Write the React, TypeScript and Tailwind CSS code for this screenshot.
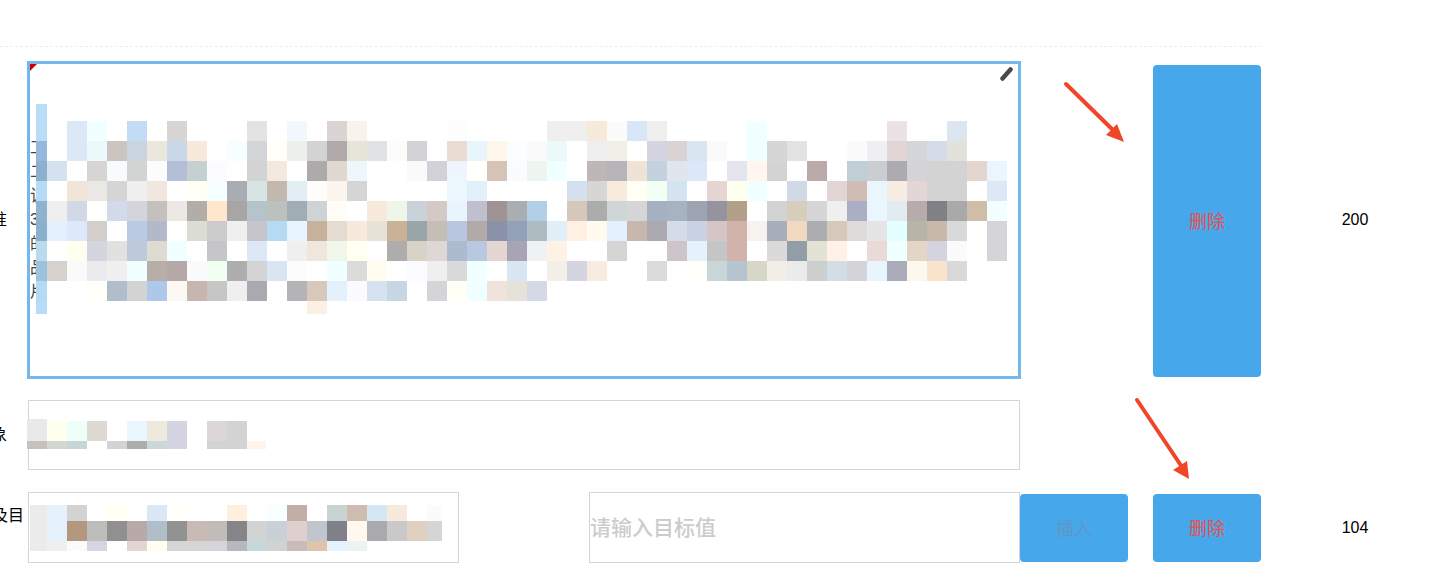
import * as React from "react"

// redacted areas of the page: one string per row, "." is an untouched (white) cell
const editorRows = [
    ". dce8f5 f0ffff . c2dcf5 . d8d6d4 . . . e3e3e3 . f0f7fd . dbd4d4 f9f3ec . . . . fdfdfd . . . . efefef efefef f6eadb fbfbfb d8e7f8 efefef . . . . f0ffff . . . . . . ebe3e3 . . dbe6f1 . .",
    ". dce8f5 ecf9fb cbc4c1 cad5df ebe7dc c9d9e8 f7eadd . f6feff d4d5d9 fffef8 ebf1ea d3d3d3 b0aaaa e5e6d8 e0e3e3 fefcfa d3d3d5 . ebdcd2 e8f5fd fff7ea fafeff fafafa ecf9f9 . efeff0 f0efe8 . d5d5e2 dbd3d3 d9e6f2 fafafa . f0ffff d6d6d6 e3e3e3 . . fbfbfb efeff2 e1d5d5 d5d6d9 d5dce7 e2e2da . .",
    "d4e2f0 . d6d5d3 f7fbfb d2d3d3 fcfcff b4bed6 c5d1d1 fcfcff . d3d3d3 f3e9de . aeaaab e0d7d1 eef8fa . . fafafa d1d1d7 eef5fd fffffb d4c3b6 f8fcff eef4f0 f0ffff . bfb6b6 b7b4ba f0e2d5 c4d2e0 e1e5ed dce8f7 . e5e5ef fff6f0 d3d3d3 . bcaaaa . c0ced5 cacdd1 acabb1 d4d4d6 d3d3d3 d3d3d3 e3d6cf ebf5fd",
    ". f1e5da eae8e4 d5d5d5 efefef f1e7df . fffff6 f6ffff a9acb3 d7e4e3 c3b8ae e2eef3 fffdfa fcf5ef d5d5d5 . . . . ecf7fe e2f0fb . . . . d4e0ed d8d6d4 f8eadd fffff5 f2fff5 d4e3f0 . e6d6d3 fffff0 f0ffff . d2d9e6 . e2d5d5 d1bcb4 e9f6fd f6ece2 e2d6d6 d3d3d3 d3d3d3 . dce8f5",
    "efefef d2d8e5 . d3daea d4d4dd c4c0bd ece8e4 b3adaa fee7cd a9a4a5 b5c3ca bcc0be a0adb5 ced3d6 fffdf5 . f7e9dc eff5e9 c9d2d8 d4c9c4 e9f5fd c0bfcd a09393 a9aeb3 b1cfe9 . d5c7ba acacac ced6d6 d6d6d8 a4b1c2 a6b3c0 9da5b2 9494a0 b3a088 . d3d3d3 d6ceba d6d6d6 efefef abafc5 e9f6fd e0ecf0 b8abab 808187 a9a9a9 d0bda8 f3ffff",
    "e3f0fe dde9fb d3cfcd . b9cae3 b2b9ca . dbdcd3 cccccc efefef c6c5cc b7daf3 e7f6fe c8b19a e4dcd0 f6eadd e6e2d7 c9b296 98a5a9 c5beb5 b8c7df b1aaa9 8a91a9 92a1b7 adbcc0 e2eef8 fff0e3 fffbee e3f0fd c7b7af aba8af d4dce8 c9d2e3 d5c5c5 d2b3ab f6f2f0 a9afba f1d8c0 acadb1 d6c8bb e0dbdb e5e5e5 e3ffff b7b4a8 c8b8aa d9d9d9 . d5d5d9",
    ". fffff0 d3d5df e1e1e1 bdcad9 dedcd0 f0ffff . c6c6c8 . dde8f6 . efefef f0e6de f0f6ea fffff2 . aeadab d9d2c7 dfd6d6 adbbcf b8c9df e3d6d3 a7a4b6 eef2f5 fef1e6 . . d5d5d5 . . cdc5c9 e6f2fb c5c5c7 d2b3ab . dadada 919ea7 e2e2d5 fff1e5 . e9dad7 f0ffff e3d6c7 d4d4e1 fbfbfb . d5d5d9",
    "d6d1cd fafafa ebebed f0f0f0 f0ffff b8aea8 b6a8a8 fbfbfd f1fff1 aeaeae d4d4d4 d9e5f2 fcfcfc . f0ffff dbdbdb fffdf0 . fafcff efefef dadada f0ffff . d8e6f4 . f4efe8 d5d5e2 f8ebe0 . . dbdbdb . fffffa c9d6d7 b6c4d0 d6d6c9 f0eee6 ebebeb cdcfce d1dee6 d4d3d7 e9f5fd aaacbc fdf8ed f9e4cb d9d9d9 . .",
    ". . fffffa b0becb d3d3d3 adc8e8 fcf8f3 c7b5b0 c6c6c6 efefef aaa9af . b4b4b6 d8c8bb e5f0fd fbfbfd d6e2f1 c6d6e3 . d4d5d8 fffff5 f0ffff efe3db e5e2d9 d5d8e5",
    ". . . . . . . . . . . . . fbf0e3",
]
const editorHeights = [20, 20, 20, 20, 20, 20, 20, 20, 20, 13]

const stripRows = ["b9dcf7", "b9dcf7", "95b7de", "8db1cc", "b5dbf7", "8fb2cd", "8bb0cb", "b8dcee", "9cc2dc", "b5daf6", "b8dcf7"]
const stripHeights = [17, 20, 20, 20, 20, 20, 20, 20, 20, 20, 13]

const targetRows = [
    "e9e9e9",
    "e9e9e9 ffffee eefff9 dfd9d4 . e9f6fe edeadd d5d4e3 . dcd6d6 d3d3d3",
    "c7c0bc d3d6d3 c7d5d4 . d3d3d3 adadad ccd8d6 d5d4e3 . d3d3d3 d3d3d3 fff4e9",
]

const levelRows = [
    "ebebeb e5f1fd d3d3d3 . fffff2 . dbe7f5 fffffa . . ffefdf . f8ffff c3aea5 . c9d3d2 cfbcb0 d5e6f5 f7e9dc . fbfbfb",
    "ebebeb e5f1fd b4977f bdbdba 909090 b9a9a9 b0beca 929292 c9bab6 c1bbb9 858488 d0d4d3 c9d0d7 dfcfce c1c5cd 80808a fff8ef aaaaae c9c9c9 dfd0c0 d5d5d5",
    "ebebeb efefef fbfbfb d6d5e2 . e2d5d5 fffff0 d5d5d5 d5d5d5 d5d5d9 b6b7bf c5d8db cfd3d2 c8bcbb dfc3aa e6f2fd eef2f3",
]

const editorLines = ["工", "二", "该", "3", "的", "品", "片"]

function Mosaic({ rows, heights, widths, className }: { rows: string[]; heights: number[]; widths: (i: number) => number; className: string }) {
    return (
        <div className={className}>
            {rows.map((row, r) => (
                <div key={r} className="flex" style={{ height: heights[r] }}>
                    {row.split(" ").map((c, i) => (
                        <div key={i} style={{ width: widths(i), backgroundColor: c === "." ? "transparent" : `#${c}` }} />
                    ))}
                </div>
            ))}
        </div>
    )
}

function Label({ text, className }: { text: string; className: string }) {
    return (
        <div className={`flex h-full items-center justify-end overflow-hidden whitespace-nowrap text-[16px] text-black ${className}`}>
            <span className="shrink-0">{text}</span>
        </div>
    )
}

function DeleteButton({ className }: { className: string }) {
    return (
        <button className={`flex w-[108px] shrink-0 items-center justify-center rounded-[4px] bg-[#46a8eb] pt-[3px] text-[18px] text-[#e8504f] ${className}`}>
            删除
        </button>
    )
}

export default function App() {
    return (
        <div className="relative h-[566px] w-[1429px] overflow-hidden bg-white font-['Liberation_Sans','Noto_Sans_CJK_SC',sans-serif]">
            <div className="h-[47px] w-[1262px] border-b border-dashed border-[#eeeeee]" />

            {/* Rich text row */}
            <div className="mt-[14px] flex h-[318px] items-start">
                <Label text="标准" className="w-[27px] pr-[20px]" />
                <div className="relative h-[318px] w-[994px] shrink-0 overflow-hidden border-[3px] border-[#72b8ee] bg-white pt-[72px] text-[16px] leading-[24px] text-[#444444]">
                    {editorLines.map((line) => (
                        <p key={line}>{line}</p>
                    ))}
                    <div className="absolute left-0 top-0 h-[7px] w-[7px] bg-[#cc0000] [clip-path:polygon(0_0,100%_0,0_100%)]" />
                    <svg className="absolute right-[3px] top-[1px] h-[16px] w-[16px] blur-[0.5px]" viewBox="0 0 16 16">
                        <path d="M3.5 13.5 L11.5 4.5" stroke="#4a4a4a" strokeWidth="4.5" strokeLinecap="round" fill="none" />
                    </svg>
                    <Mosaic rows={stripRows} heights={stripHeights} widths={() => 11} className="absolute left-[6px] top-[40px]" />
                    <Mosaic rows={editorRows} heights={editorHeights} widths={() => 20} className="absolute left-[17px] top-[57px]" />
                </div>
                <DeleteButton className="ml-[132px] mt-[4px] h-[312px]" />
                <div className="ml-[74px] flex h-full w-[40px] items-center justify-center text-[16px] text-black">200</div>
            </div>

            {/* Target row */}
            <div className="mt-[21px] flex h-[70px] items-start">
                <Label text="对象" className="w-[28px] pr-[21px]" />
                <div className="relative h-[70px] w-[992px] shrink-0 border border-[#d5d5d5]">
                    <Mosaic
                        rows={targetRows}
                        heights={[2, 20, 8]}
                        widths={(i) => (i === 11 ? 19 : 20)}
                        className="absolute left-[-2px] top-[18px]"
                    />
                </div>
            </div>

            {/* Level row */}
            <div className="mt-[22px] flex h-[71px] items-start">
                <Label text="指标及目" className="w-[28px] pb-[24px] pr-[4px]" />
                <div className="relative h-[71px] w-[431px] shrink-0 border border-[#d5d5d5]">
                    <Mosaic
                        rows={levelRows}
                        heights={[16, 20, 10]}
                        widths={(i) => (i === 0 ? 17 : i === 20 ? 15 : 20)}
                        className="absolute left-[1px] top-[12px]"
                    />
                </div>
                <input
                    placeholder="请输入目标值"
                    className="ml-[130px] h-[71px] w-[431px] shrink-0 border border-[#d5d5d5] text-[21px] font-medium outline-none placeholder:text-[#cccccc]"
                />
                <button className="mt-[2px] flex h-[68px] w-[108px] shrink-0 items-center justify-center rounded-[4px] bg-[#46a8eb] pt-[3px] text-[18px] text-[#5f97c4]">
                    插入
                </button>
                <DeleteButton className="ml-[25px] mt-[2px] h-[68px]" />
                <div className="ml-[74px] flex h-full w-[40px] items-center justify-center text-[16px] text-black">104</div>
            </div>

            {/* Annotation arrows */}
            <svg className="absolute left-[1060px] top-[78px] h-[70px] w-[70px]" viewBox="0 0 70 70">
                <path d="M6 6 L56 55" stroke="#f04526" strokeWidth="4" strokeLinecap="round" fill="none" />
                <path d="M64 64 L57 46 L46 57 Z" fill="#f04526" />
            </svg>
            <svg className="absolute left-[1130px] top-[395px] h-[90px] w-[65px]" viewBox="0 0 65 90">
                <path d="M7 5 L52 72" stroke="#f04526" strokeWidth="4" strokeLinecap="round" fill="none" />
                <path d="M59 84 L57 66 L43 75 Z" fill="#f04526" />
            </svg>
        </div>
    )
}
